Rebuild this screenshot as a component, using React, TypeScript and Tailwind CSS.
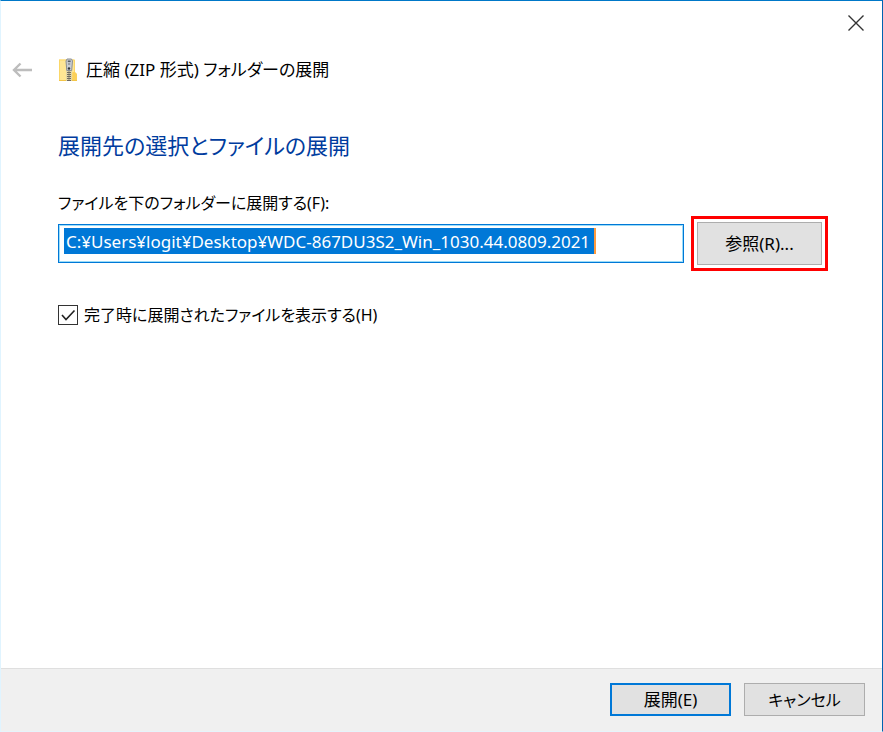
import { useEffect, useRef, useState } from "react";

function ZipFolderIcon() {
  return (
    <svg width="20" height="24" viewBox="0 0 20 24" aria-hidden="true">
      <path d="M1 1.500h15.500V14l2 1.500V23H1z" fill="#ffe694" />
      <path d="M1.500 2v20.500M1 2h15.500V14" fill="none" stroke="#fbd768" />
      <path d="M14.500 14H17l2 2v7h-5z" fill="#fbd05a" />
      <path d="M1 22.500h18" stroke="#f3c548" />
      <path d="M8 11h6v12H8z" fill="#e3d6a6" />
      <path d="M11 12v11" stroke="#55524a" strokeWidth="3.600" strokeDasharray="1 1" />
      <path d="M11 12v11" stroke="#8a857a" />
      <path d="M9 1h4.500l1 2-.8 9.500H8.800L8 3z" fill="#c9cdd2" stroke="#8b8f94" />
      <path d="M9.800 2.500h2.800v1.600H9.800z" fill="#5a5e63" />
      <path d="M10 6h2.200" stroke="#6e7277" />
      <circle cx="11" cy="10.500" r="1.200" fill="#33373b" />
    </svg>
  );
}

export default function App() {
  const pathRef = useRef<HTMLInputElement>(null);
  const [path, setPath] = useState("C:¥Users¥logit¥Desktop¥WDC-867DU3S2_Win_1030.44.0809.2021");
  const [showFiles, setShowFiles] = useState(true);

  useEffect(() => {
    pathRef.current?.select();
  }, []);

  return (
    <div className="flex min-h-screen flex-col border border-t-[#0078c8] border-r-[#0063b1] border-b-[#e6f4fb] border-l-[#e0f4ff] bg-white font-['Noto_Sans','Noto_Sans_CJK_JP',sans-serif] text-base leading-6 text-black [font-feature-settings:'palt']">
      <div className="flex h-11 justify-end pr-3">
        <button type="button" aria-label="閉じる" className="flex w-7 items-center justify-center">
          <svg width="18" height="18" viewBox="0 0 18 18" fill="none" stroke="#333" strokeWidth="1.4">
            <path d="M1.500 1.500l15 15M16.500 1.500l-15 15" />
          </svg>
        </button>
      </div>

      <header className="flex h-[50px] items-center pl-[11px]">
        <button type="button" aria-label="戻る" disabled className="mr-[26px] w-5">
          <svg width="20" height="16" viewBox="0 0 20 16" fill="none" stroke="#bdbdbd" strokeWidth="2.4">
            <path d="M20 8H2M8.500 1.500L2 8l6.500 6.500" />
          </svg>
        </button>
        <ZipFolderIcon />
        <span className="ml-2 text-[17px]">圧縮 (ZIP 形式) フォルダーの展開</span>
      </header>

      <main className="flex-1 pt-[34px] pr-[54px] pl-[57px]">
        <h1 className="text-[22px] leading-8 text-[#003c9e]">展開先の選択とファイルの展開</h1>

        <label htmlFor="path" className="mt-[30px] block">
          ファイルを下のフォルダーに展開する(F):
        </label>
        <div className="mt-px flex items-center gap-[7px]">
          <div className="flex h-[39px] min-w-0 flex-1 items-start border border-[#0078d7] px-[5px] pt-[3px] ring-1 ring-[#9bdcf8] ring-inset">
            <input
              id="path"
              ref={pathRef}
              type="text"
              value={path}
              onChange={(e) => setPath(e.target.value)}
              className="field-sizing-content h-[26px] max-w-full border-r-2 border-[#ff9a3c] bg-[#0078d7] pr-1 pl-0.5 text-[17px] text-white outline-none selection:bg-[#0078d7] selection:text-white"
            />
          </div>
          <div className="border-3 border-[#ff0000] p-[3px]">
            <button type="button" className="h-[43px] w-[125px] border border-[#adadad] bg-[#e1e1e1] text-[17px]">
              参照(R)...
            </button>
          </div>
        </div>

        <label className="mt-8 flex items-center gap-1.5">
          <span className="grid">
            <input
              type="checkbox"
              checked={showFiles}
              onChange={(e) => setShowFiles(e.target.checked)}
              className="peer col-start-1 row-start-1 size-5 appearance-none border border-[#333] bg-white"
            />
            <svg
              className="pointer-events-none invisible col-start-1 row-start-1 size-5 peer-checked:visible"
              viewBox="0 0 20 20"
              fill="none"
              stroke="#222"
              strokeWidth="1.6"
            >
              <path d="M4 10l4 4.500L16.500 5.500" />
            </svg>
          </span>
          <span>完了時に展開されたファイルを表示する(H)</span>
        </label>
      </main>

      <footer className="flex justify-end gap-[13px] border-t border-[#dfdfdf] bg-[#f0f0f0] pt-3.5 pr-[17px] pb-[15px]">
        <button type="submit" className="h-[33px] w-[121px] border-2 border-[#0078d7] bg-[#e1e1e1] text-[17px]">
          展開(E)
        </button>
        <button type="button" className="h-[33px] w-[121px] border border-[#adadad] bg-[#e1e1e1]">
          キャンセル
        </button>
      </footer>
    </div>
  );
}
